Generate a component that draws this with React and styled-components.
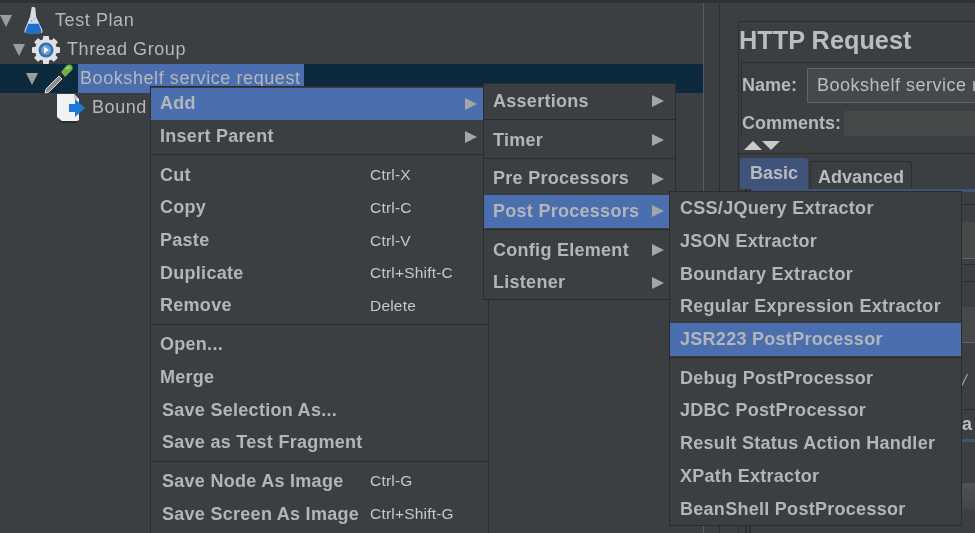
import React from "react";
import styled, { createGlobalStyle } from "styled-components";

const addItems = [
  { label: "Add", arrow: true, active: true },
  { label: "Insert Parent", arrow: true },
  { sep: true },
  { label: "Cut", keys: "Ctrl-X" },
  { label: "Copy", keys: "Ctrl-C" },
  { label: "Paste", keys: "Ctrl-V" },
  { label: "Duplicate", keys: "Ctrl+Shift-C" },
  { label: "Remove", keys: "Delete" },
  { sep: true },
  { label: "Open..." },
  { label: "Merge" },
  { label: "Save Selection As...", nudge: true },
  { label: "Save as Test Fragment", nudge: true },
  { sep: true },
  { label: "Save Node As Image", keys: "Ctrl-G", nudge: true },
  { label: "Save Screen As Image", keys: "Ctrl+Shift-G", nudge: true },
];

const groupItems = [
  { label: "Assertions", arrow: true },
  { sep: true },
  { label: "Timer", arrow: true },
  { sep: true },
  { label: "Pre Processors", arrow: true },
  { label: "Post Processors", arrow: true, active: true },
  { sep: true },
  { label: "Config Element", arrow: true },
  { label: "Listener", arrow: true },
];

const postItems = [
  { label: "CSS/JQuery Extractor" },
  { label: "JSON Extractor" },
  { label: "Boundary Extractor" },
  { label: "Regular Expression Extractor" },
  { label: "JSR223 PostProcessor", active: true },
  { sep: true },
  { label: "Debug PostProcessor" },
  { label: "JDBC PostProcessor" },
  { label: "Result Status Action Handler" },
  { label: "XPath Extractor" },
  { label: "BeanShell PostProcessor" },
];

function FlaskIcon() {
  return (
    <svg width="21" height="28" viewBox="0 0 24 32">
      <path d="M10 0h3l1 1 1 10 7 15c1 3 0 4-3 4H5c-3 0-4-1-3-4l6-15z" fill="#d9dde2" />
      <path d="M6 19h12l3 8c0 2 0 3-3 3H6c-3 0-4-1-3-3z" fill="#1c6fd0" />
      <circle cx="10" cy="16" r="1" fill="#5b9be0" />
      <circle cx="13" cy="13" r="1" fill="#8fb8e0" />
    </svg>
  );
}

function GearIcon() {
  return (
    <svg width="30" height="30" viewBox="0 0 30 30">
      <g fill="#dfe1e3">
        <circle cx="15" cy="15" r="11" />
        {[0, 45, 90, 135, 180, 225, 270, 315].map((a) => (
          <rect key={a} x="12" y="1" width="6" height="6" rx="1" transform={`rotate(${a} 15 15)`} />
        ))}
      </g>
      <circle cx="15" cy="15" r="7.5" fill="#2f6fb4" />
      <circle cx="15" cy="15" r="5" fill="#6f9fd0" />
      <path d="M13 11.5l5 3.5-5 3.5z" fill="#f2f5f8" />
    </svg>
  );
}

function DropperIcon() {
  return (
    <svg width="30" height="30" viewBox="0 0 30 30">
      <path d="M1 29l1-4 13-13 3 3L5 28z" fill="#8a8d90" stroke="#dcdcdc" strokeWidth="1" />
      <path d="M13 9l8 8 2-2-8-8z" fill="#26282a" />
      <path d="M17 8l5-6c2-2 5-2 6 0s1 4-1 5l-6 6z" fill="#6fb04a" />
      <path d="M22 5c1-1 3-2 4-1" stroke="#a9d68a" strokeWidth="1.5" fill="none" />
    </svg>
  );
}

function NodeIcon() {
  return (
    <svg width="30" height="30" viewBox="0 0 30 30">
      <path d="M1 1h17l5 5v21l-2 1H6l-5-4z" fill="#f1f2f3" />
      <path d="M18 1l5 5h-5z" fill="#c4c6c8" />
      <path d="M4 29h17" stroke="#25282a" strokeWidth="1.5" />
      <path d="M19 6l10 9-10 9v-5h-6v-8h6z" fill="#1e78d8" />
    </svg>
  );
}

function Menu({ items, className, width }) {
  return (
    <MenuBox className={className} $width={width}>
      {items.map((item, i) =>
        item.sep ? (
          <Separator key={i} />
        ) : (
          <MenuRow key={i} $active={item.active}>
            <MenuLabel $nudge={item.nudge} $column={item.keys}>{item.label}</MenuLabel>
            {item.keys && <Shortcut>{item.keys}</Shortcut>}
            {item.arrow && <SubArrow />}
          </MenuRow>
        )
      )}
    </MenuBox>
  );
}

function App() {
  return (
    <>
      <GlobalStyle />
      <Screen>
        <TreePanel>
          <TreeRow $depth={0}>
            <Expander />
            <IconSlot $width={42} $pad={11}><FlaskIcon /></IconSlot>
            <TreeLabel>Test Plan</TreeLabel>
          </TreeRow>
          <TreeRow $depth={13}>
            <Expander />
            <IconSlot $width={41} $pad={6}><GearIcon /></IconSlot>
            <TreeLabel>Thread Group</TreeLabel>
          </TreeRow>
          <TreeRow $depth={26} $selected>
            <Expander />
            <IconSlot $width={41} $pad={6}><DropperIcon /></IconSlot>
            <TreeLabel $selected>Bookshelf service request</TreeLabel>
          </TreeRow>
          <TreeRow $depth={55}>
            <IconSlot $width={36} $pad={1}><NodeIcon /></IconSlot>
            <TreeLabel>Bound</TreeLabel>
          </TreeRow>
        </TreePanel>
        <Splitter />
        <EditorPanel>
          <EditorInner>
            <TitleBox>
              <Title>HTTP Request</Title>
              <NameBox>
                <NameRow>
                  <FieldLabel>Name:</FieldLabel>
                  <NameField>Bookshelf service request</NameField>
                </NameRow>
                <CommentsRow>
                  <FieldLabel>Comments:</FieldLabel>
                  <CommentsField />
                </CommentsRow>
              </NameBox>
            </TitleBox>
            <Collapsers>
              <CollapseUp />
              <CollapseDown />
            </Collapsers>
            <Tabs>
              <Tab $active>Basic</Tab>
              <Tab>Advanced</Tab>
            </Tabs>
            <TabBody>
              <BlueRule />
              <SectionLine $top={12} />
              <InputBand $top={17} $height={36} />
              <SectionLine $top={5} />
              <SectionLine $top={16} />
              <InputBand $top={25} $height={35} />
              <StrayText $top={28}>/</StrayText>
              <SectionLine $top={18} />
              <CutOffText>a</CutOffText>
              <BlueRule />
              <DimBand />
            </TabBody>
          </EditorInner>
        </EditorPanel>
        <AddMenu items={addItems} />
        <GroupMenu items={groupItems} />
        <PostMenu items={postItems} />
      </Screen>
    </>
  );
}

const GlobalStyle = createGlobalStyle`
  html, body {
    margin: 0;
    padding: 0;
    background: #3c3f41;
  }
  body {
    font-family: "Liberation Sans", Arial, sans-serif;
    color: #bbbdc0;
    overflow: hidden;
  }
`;

const Screen = styled.div`
  position: relative;
  display: flex;
  width: 975px;
  height: 533px;
  overflow: hidden;
  background: #3c3f41;
  border-top: 3px solid #2f3133;
  box-sizing: border-box;
  filter: blur(0.45px);
`;

const TreePanel = styled.div`
  width: 703px;
  flex: none;
  padding-top: 3px;
  border-right: 1px solid #5a5d5f;
`;

const TreeRow = styled.div`
  display: flex;
  align-items: center;
  height: 29px;
  padding-left: ${(p) => p.$depth}px;
  background: ${(p) => (p.$selected ? "#0d293e" : "transparent")};
`;

const Expander = styled.span`
  flex: none;
  width: 0;
  height: 0;
  border-left: 6.5px solid transparent;
  border-right: 6.5px solid transparent;
  border-top: 12px solid #9b9d9f;
`;

const IconSlot = styled.span`
  flex: none;
  display: flex;
  box-sizing: border-box;
  width: ${(p) => p.$width + 1}px;
  padding-left: ${(p) => p.$pad}px;
`;

const TreeLabel = styled.span`
  font-size: 18px;
  letter-spacing: 0.58px;
  line-height: 29px;
  white-space: nowrap;
  color: #b4b8bc;
  ${(p) => p.$selected && "background: #4b6eaf; padding: 0 3px 0 2px; margin-left: -2px;"}
`;

const Splitter = styled.div`
  width: 15px;
  flex: none;
`;

const EditorPanel = styled.div`
  flex: 1;
  min-width: 0;
  display: flex;
  border-left: 1px solid #2b2d2f;
  padding: 18px 0 0 18px;
`;

const EditorInner = styled.div`
  flex: 1;
  min-width: 0;
  display: flex;
  flex-direction: column;
  border-left: 1px solid #2b2d2f;
`;

const TitleBox = styled.div`
  flex: none;
  border-top: 1px solid #2b2d2f;
  height: 116px;
  box-sizing: border-box;
  white-space: nowrap;
  overflow: hidden;
`;

const Title = styled.div`
  height: 40px;
  line-height: 36px;
  font-size: 25.3px;
  font-weight: bold;
  color: #b9bdc2;
`;

const NameBox = styled.div`
  margin-left: 2px;
  border-left: 1px solid #2b2d2f;
  border-top: 1px solid #2b2d2f;
  height: 75px;
`;

const NameRow = styled.div`
  display: flex;
  align-items: center;
  height: 44px;
`;

const CommentsRow = styled.div`
  display: flex;
  align-items: center;
  height: 30px;
  padding-top: 2px;
  box-sizing: border-box;
`;

const FieldLabel = styled.span`
  flex: none;
  margin-right: 10px;
  font-size: 18px;
  font-weight: bold;
  color: #b5b9bd;
`;

const NameField = styled.div`
  flex: none;
  width: 220px;
  height: 35px;
  line-height: 33px;
  padding-left: 9px;
  box-sizing: border-box;
  font-size: 18px;
  letter-spacing: 0.5px;
  background: #45494a;
  border: 1px solid #646464;
`;

const CommentsField = styled.div`
  flex: none;
  width: 200px;
  height: 25px;
  margin-left: -7px;
  background: #45494a;
`;

const Collapsers = styled.div`
  flex: none;
  display: flex;
  align-items: center;
  gap: 0;
  height: 16px;
  padding-left: 5px;
  box-sizing: border-box;
`;

const CollapseUp = styled.span`
  width: 0;
  height: 0;
  border-left: 9px solid transparent;
  border-right: 9px solid transparent;
  border-bottom: 9px solid #c9cbcd;
`;

const CollapseDown = styled.span`
  width: 0;
  height: 0;
  border-left: 9px solid transparent;
  border-right: 9px solid transparent;
  border-top: 9px solid #c9cbcd;
`;

const Tabs = styled.div`
  flex: none;
  display: flex;
  align-items: flex-end;
  gap: 2px;
  height: 36px;
  padding-left: 1px;
  border-top: 1px solid #2b2d2f;
  box-sizing: border-box;
`;

const Tab = styled.div`
  height: ${(p) => (p.$active ? 31 : 28)}px;
  line-height: ${(p) => (p.$active ? 29 : 31)}px;
  padding: 0 ${(p) => (p.$active ? 9 : 7)}px;
  font-size: 18px;
  font-weight: bold;
  box-sizing: border-box;
  border-radius: 3px 3px 0 0;
  color: #b7bbbf;
  background: ${(p) => (p.$active ? "#3f5478" : "#3c3f41")};
  border: 1px solid ${(p) => (p.$active ? "#3f5478" : "#2b2d2f")};
  border-bottom: 0;
`;

const TabBody = styled.div`
  flex: 1;
  margin-left: 6px;
  border-left: 6px double #2b2d2f;
  display: flex;
  flex-direction: column;
  align-items: stretch;
`;

const BlueRule = styled.div`
  height: 3px;
  flex: none;
  background: #3f5478;
`;

const SectionLine = styled.div`
  height: 1px;
  flex: none;
  margin-top: ${(p) => p.$top}px;
  background: #2b2d2f;
`;

const InputBand = styled.div`
  flex: none;
  margin-top: ${(p) => p.$top}px;
  height: ${(p) => p.$height}px;
  background: #45494a;
  border-bottom: 1px solid #646464;
`;

const StrayText = styled.div`
  margin-top: ${(p) => p.$top}px;
  padding-left: 211px;
  height: 20px;
  line-height: 20px;
  font-size: 17px;
  font-style: italic;
  color: #a89a8c;
`;

const CutOffText = styled.div`
  padding-left: 211px;
  height: 29px;
  line-height: 29px;
  font-size: 18px;
  font-weight: bold;
`;

const DimBand = styled.div`
  flex: none;
  margin-top: 41px;
  height: 26px;
  background: linear-gradient(#4f5254, #434648);
`;

const MenuBox = styled.div`
  position: absolute;
  box-sizing: border-box;
  background: #3c3f41;
  border: 1px solid #2a2c2e;
  padding-top: 1px;
  width: ${(p) => p.$width}px;
`;

const AddMenu = styled(Menu).attrs({ width: 339 })`
  left: 150px;
  top: 82.5px;
  height: 460px;
`;

const GroupMenu = styled(Menu).attrs({ width: 193 })`
  left: 483px;
  top: 80px;
`;

const PostMenu = styled(Menu).attrs({ width: 293 })`
  --row-inset: 10px;
  left: 669px;
  top: 187.5px;
`;

const MenuRow = styled.div`
  display: flex;
  align-items: center;
  height: 32.7px;
  padding: 0 11px 0 var(--row-inset, 9px);
  background: ${(p) => (p.$active ? "#4b6eaf" : "transparent")};
`;

const MenuLabel = styled.span`
  flex: none;
  width: ${(p) => (p.$column ? "210px" : "auto")};
  margin-left: ${(p) => (p.$nudge ? 2 : 0)}px;
  margin-right: ${(p) => (p.$nudge ? -2 : 0)}px;
  font-size: 18px;
  font-weight: bold;
  letter-spacing: 0.28px;
  white-space: nowrap;
  color: #b2b6ba;
`;

const Shortcut = styled.span`
  font-size: 15.5px;
  letter-spacing: 0.2px;
  white-space: nowrap;
  color: #c5c8cb;
`;

const SubArrow = styled.span`
  margin-left: auto;
  width: 0;
  height: 0;
  border-top: 6.5px solid transparent;
  border-bottom: 6.5px solid transparent;
  border-left: 12px solid #a3a5a7;
`;

const Separator = styled.div`
  height: 1px;
  margin: 1.5px 0 3.5px;
  background: #2a2c2e;
`;

export default App;
